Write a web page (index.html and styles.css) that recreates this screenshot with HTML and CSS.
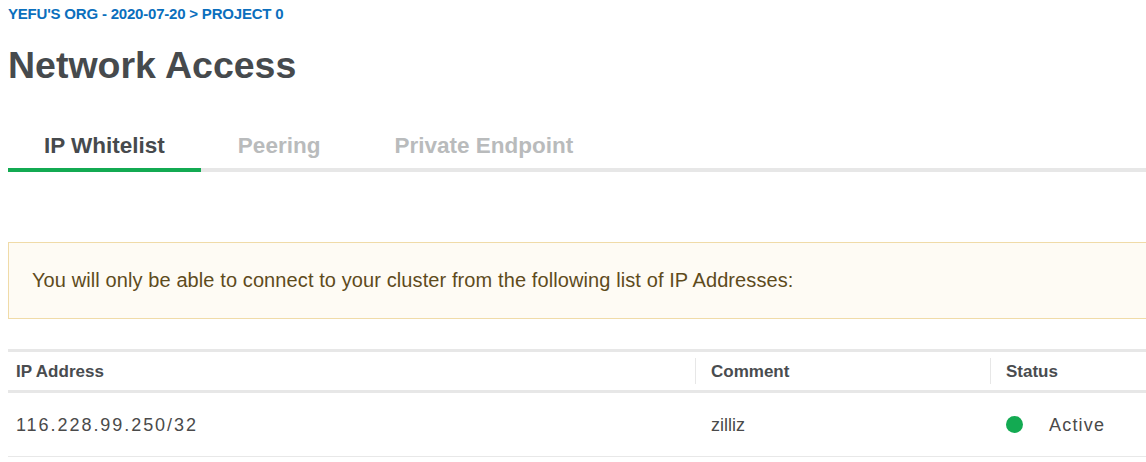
FILE: index.html
```html
<!DOCTYPE html>
<html lang="en">
<head>
<meta charset="utf-8">
<title>Network Access</title>
<link rel="stylesheet" href="styles.css">
</head>
<body>
<div class="page">
  <div class="breadcrumb">YEFU'S ORG - 2020-07-20 &gt; PROJECT 0</div>
  <h1 class="title">Network Access</h1>
  <div class="tabs">
    <div class="tab tab-active">IP Whitelist</div>
    <div class="tab">Peering</div>
    <div class="tab">Private Endpoint</div>
  </div>
  <div class="alert">You will only be able to connect to your cluster from the following list of IP Addresses:</div>
  <div class="table">
    <div class="row head">
      <div class="cell">IP Address</div>
      <div class="cell divided">Comment</div>
      <div class="cell divided">Status</div>
    </div>
    <div class="row body">
      <div class="cell ip">116.228.99.250/32</div>
      <div class="cell">zilliz</div>
      <div class="cell status"><span class="dot"></span><span>Active</span></div>
    </div>
  </div>
</div>
</body>
</html>
```

FILE: styles.css
```css
html, body {
  margin: 0;
  padding: 0;
  overflow: hidden;
  background: #ffffff;
}
body {
  font-family: "Liberation Sans", Arial, sans-serif;
  color: #464a4d;
}
.page {
  width: 1200px;
  padding: 4px 0 0 8px;
}
.breadcrumb {
  font-size: 15px;
  line-height: 20px;
  font-weight: bold;
  letter-spacing: -0.2px;
  color: #0b6fbd;
}
.title {
  margin: 19px 0 0;
  font-size: 37.5px;
  line-height: 44px;
  font-weight: bold;
  color: #464a4d;
}
.tabs {
  display: flex;
  margin-top: 45px;
  border-bottom: 4px solid #e7e7e7;
}
.tab {
  padding: 1px 37px 9px;
  font-size: 22.5px;
  line-height: 26px;
  font-weight: bold;
  color: #b9bbbc;
}
.tab-active {
  padding: 1px 36px 9px;
  color: #464a4d;
  border-bottom: 4px solid #13aa52;
  margin-bottom: -4px;
}
.alert {
  margin-top: 70px;
  height: 75px;
  display: flex;
  align-items: center;
  padding-left: 23px;
  background: #fefbf4;
  border: 1px solid #f0dba8;
  font-size: 20px;
  letter-spacing: 0.1px;
  color: #5e4b1c;
}
.table {
  margin-top: 30px;
  border-top: 3px solid #e7e7e7;
}
.row {
  display: grid;
  grid-template-columns: 687px 295px 1fr;
}
.head {
  height: 38px;
  border-bottom: 3px solid #e7e7e7;
  font-size: 17px;
  font-weight: bold;
  color: #494c4f;
}
.head .cell {
  display: flex;
  align-items: center;
  padding: 1px 0 0 8px;
}
.head .divided {
  padding-left: 16px;
  position: relative;
}
.head .divided::before {
  content: "";
  position: absolute;
  left: 0;
  top: 6px;
  bottom: 6px;
  border-left: 1px solid #e7e7e7;
}
.body {
  height: 63px;
  border-bottom: 1px solid #e8e8e8;
  font-size: 18px;
  color: #4a4a4a;
}
.body .cell {
  display: flex;
  align-items: center;
  padding: 2px 0 0 16px;
}
.body .cell.ip {
  padding-left: 8px;
  letter-spacing: 1.95px;
}
.status {
  gap: 26px;
}
.status span:last-child {
  letter-spacing: 1.2px;
}
.dot {
  width: 17px;
  height: 17px;
  border-radius: 50%;
  background: #13aa52;
  margin-top: -2px;
}
```
